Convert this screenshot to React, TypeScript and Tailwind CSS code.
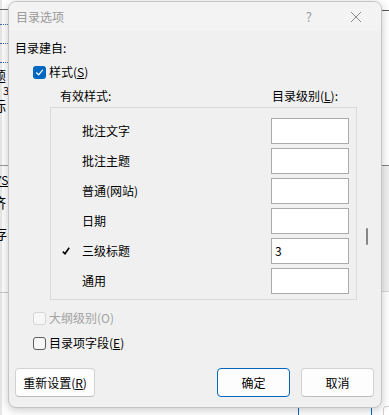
import React from "react";

const font = "font-['Noto_Sans_CJK_SC','Noto_Sans',sans-serif]";

function CheckedBox() {
  return (
    <div className="w-[13px] h-[13px] rounded-[3px] bg-[#0067c0] flex items-center justify-center shrink-0">
      <svg width="9" height="9" viewBox="0 0 9 9">
        <path d="M1.5 4.8 L3.6 6.8 L7.6 2.2" fill="none" stroke="#fff" strokeWidth="1.2" strokeLinecap="round" strokeLinejoin="round" />
      </svg>
    </div>
  );
}

function EmptyBox({ disabled }: { disabled?: boolean }) {
  return (
    <div
      className={
        disabled
          ? "w-[13px] h-[13px] rounded-[3px] border border-[#d6d6d6] bg-[#f7f7f7] shrink-0"
          : "w-[13px] h-[13px] rounded-[3px] border border-[#5d5d5d] bg-[#f7f7f7] shrink-0"
      }
    />
  );
}

const rows: { name: string; level: string; checked?: boolean }[] = [
  { name: "批注文字", level: "" },
  { name: "批注主题", level: "" },
  { name: "普通(网站)", level: "" },
  { name: "日期", level: "" },
  { name: "三级标题", level: "3", checked: true },
  { name: "通用", level: "" },
];

export default function App() {
  return (
    <div className={`relative w-[389px] h-[415px] bg-white overflow-hidden text-[12px] text-black ${font}`}>
      {/* background fragments (behind the dialog) */}
      <div className="absolute left-0 top-0 w-[2px] h-[415px] bg-[#e6e6e6]" />
      <div className="absolute left-0 top-[9px] w-[8px] h-px bg-[#6b6b6b]" />
      <div className="absolute left-0 top-[24px] w-[8px] border-t border-dotted border-[#3d6cb0]" />
      <div className="absolute left-0 top-[43px] w-[8px] border-t border-dotted border-[#3d6cb0]" />
      <div className="absolute left-0 top-[62px] w-[8px] border-t border-dotted border-[#3d6cb0]" />
      <div className="absolute left-[-8px] top-[66px] text-[14px] leading-[18px]">题</div>
      <div className="absolute left-[3px] top-[82px] text-[11px] leading-[16px]">3</div>
      <div className="absolute left-[-8px] top-[96px] text-[14px] leading-[18px]">标</div>
      <div className="absolute left-0 top-[165px] w-[8px] h-px bg-[#9a9a9a]" />
      <div className="absolute left-[-5px] top-[172px] text-[12px] leading-[16px] underline">YS</div>
      <div className="absolute left-[-8px] top-[193px] text-[14px] leading-[18px]">济</div>
      <div className="absolute left-[-7px] top-[224px] text-[14px] leading-[18px]">存(</div>
      <div className="absolute left-0 top-[292px] w-[8px] h-px bg-[#c8c8c8]" />

      <div className="absolute left-[381px] top-[10px] w-[8px] h-px bg-[#555]" />
      <div className="absolute left-[381px] top-[165px] w-[8px] h-[127px] bg-[#f0f0f0] border-t border-[#808080] border-b border-b-[#d8d8d8]" />
      <div className="absolute left-[298px] top-[406px] w-[74px] h-[20px] rounded-[3px] border border-[#0067c0] bg-white" />
      <div className="absolute left-[383px] top-[406px] w-[20px] h-[20px] rounded-[3px] border border-[#cfcfcf] bg-white" />

      {/* dialog */}
      <div className="absolute left-[8px] top-[1px] w-[374px] h-[407px] rounded-[8px] border border-[#c4c4c4] bg-[#f0f0f0] overflow-hidden shadow-[0_2px_10px_rgba(0,0,0,0.22)] flex flex-col">
        {/* title bar */}
        <div className="h-[29px] shrink-0 bg-[#f3f3f3] flex items-center">
          <span className="ml-[7px] text-[#9a9a9a] text-[12px] leading-[16px]">目录选项</span>
          <span className="ml-auto mr-[38px] text-[#9a9a9a] text-[13px] leading-[16px]">?</span>
          <svg className="mr-[19px]" width="12" height="12" viewBox="0 0 12 12">
            <path d="M1 1 L11 11 M11 1 L1 11" stroke="#8a8a8a" strokeWidth="1" fill="none" />
          </svg>
        </div>

        {/* body */}
        <div className="flex flex-col">
          <div className="mt-[9px] ml-[6px] h-[16px] leading-[16px]">目录建自:</div>

          <div className="mt-[8px] ml-[24px] h-[16px] flex items-center gap-[3px]">
            <CheckedBox />
            <span className="leading-[16px]">
              样式(<span className="underline">S</span>)
            </span>
          </div>

          <div className="mt-[8px] h-[16px] flex leading-[16px]">
            <span className="ml-[51px] w-[212px]">有效样式:</span>
            <span>
              目录级别(<span className="underline">L</span>):
            </span>
          </div>

          <div className="mt-[3px] flex">
            <div className="ml-[41px] w-[307px] h-[193px] border border-[#dadada] bg-[#f0f0f0] pt-[10px] flex flex-col gap-[4px]">
              {rows.map((r) => (
                <div key={r.name} className="h-[26px] flex items-center">
                  <div className="w-[31px] pl-[11px] flex items-center">
                    {r.checked ? (
                      <svg width="8" height="8" viewBox="0 0 8 8">
                        <path d="M0.8 4.6 L3 6.8 L7.2 0.8" fill="none" stroke="#000" strokeWidth="1.6" />
                      </svg>
                    ) : null}
                  </div>
                  <span className="w-[189px] leading-[16px]">{r.name}</span>
                  <div className="w-[78px] h-[26px] border border-[#ababab] bg-white flex items-center pl-[3px] leading-[16px]">
                    {r.level}
                  </div>
                </div>
              ))}
            </div>
            <div className="ml-[9px] mt-[121px] w-[2px] h-[17px] rounded-full bg-[#868686]" />
          </div>

          <div className="mt-[10px] ml-[24px] h-[16px] flex items-center gap-[3px]">
            <EmptyBox disabled />
            <span className="leading-[16px] text-[#a2a2a2]">大纲级别(O)</span>
          </div>

          <div className="mt-[9px] ml-[24px] h-[16px] flex items-center gap-[3px]">
            <EmptyBox />
            <span className="leading-[16px]">
              目录项字段(<span className="underline">E</span>)
            </span>
          </div>

          <div className="mt-[17px] flex">
            <button className="ml-[6px] w-[80px] h-[29px] rounded-[4px] border border-[#d2d2d2] border-b-[#bcbcbc] bg-[#fdfdfd] text-[12px] leading-[16px]">
              重新设置(<span className="underline">R</span>)
            </button>
            <button className="ml-[122px] w-[73px] h-[29px] rounded-[4px] border border-[#0067c0] bg-[#fdfdfd] text-[12px] leading-[16px]">
              确定
            </button>
            <button className="ml-[11px] w-[73px] h-[29px] rounded-[4px] border border-[#d2d2d2] border-b-[#bcbcbc] bg-[#fdfdfd] text-[12px] leading-[16px]">
              取消
            </button>
          </div>
        </div>
      </div>
    </div>
  );
}
